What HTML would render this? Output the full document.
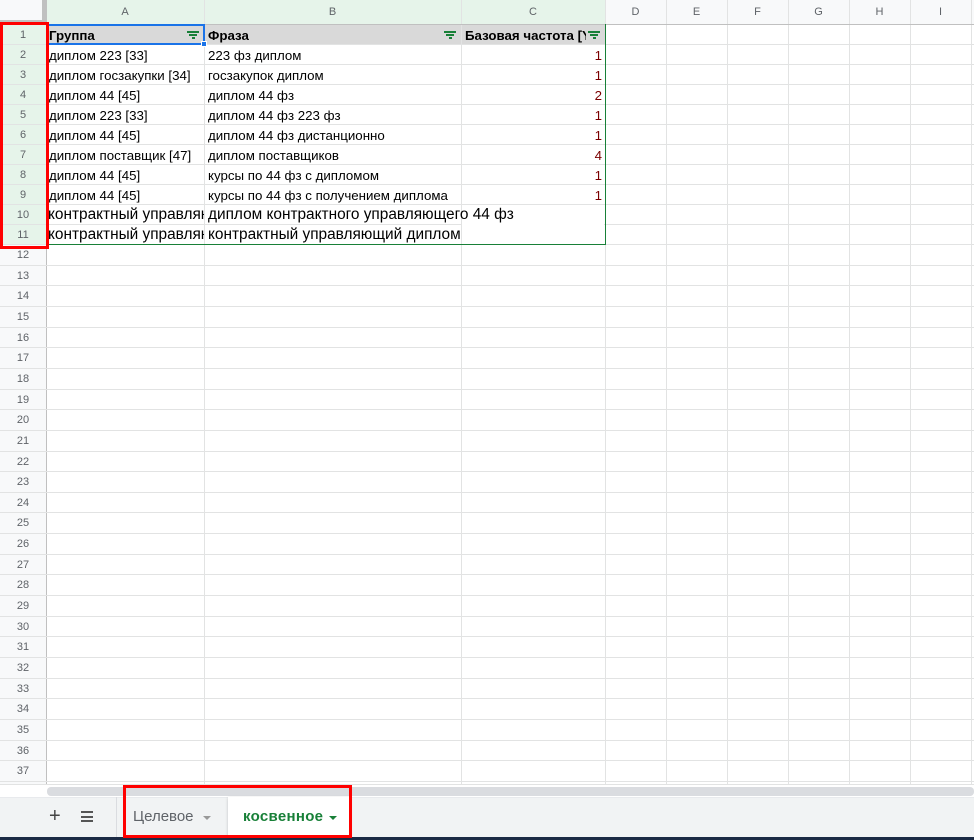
<!DOCTYPE html>
<html><head><meta charset="utf-8"><style>
*{margin:0;padding:0;box-sizing:border-box}
body{width:974px;height:840px;overflow:hidden;background:#fff;font-family:"Liberation Sans",Arial,sans-serif;position:relative}
.v{position:absolute;top:0;width:1px;height:785px;background:#e2e3e3}
.h{position:absolute;left:0;width:974px;height:1px;background:#e2e3e3}
.t{position:absolute;font-size:13.3px;line-height:20px;height:20px;padding-top:2px;white-space:nowrap;overflow:hidden;color:#000}
.n{position:absolute;left:0;width:46px;text-align:center;font-size:11px;color:#5f6368;line-height:20px}
.ch{position:absolute;top:0;height:24px;line-height:24px;text-align:center;font-size:11px;color:#5f6368}
.r{text-align:right;color:#7a0000}
.b{font-size:15.4px;padding-top:0}
.red{position:absolute;border:3px solid #f00}
.fl{position:absolute;width:12px;height:8px}
.fl i{display:block;height:1.5px;background:#188038;margin:0 auto 1.5px}
</style></head><body>
<div style="position:absolute;left:0;top:0;width:974px;height:24px;background:#f8f9fa"></div>
<div style="position:absolute;left:46px;top:0;width:559px;height:24px;background:#e6f4ea"></div>
<div style="position:absolute;left:0;top:24px;width:46px;height:761px;background:#f8f9fa"></div>
<div style="position:absolute;left:0;top:24px;width:46px;height:220px;background:#e6f4ea"></div>
<div style="position:absolute;left:46px;top:24px;width:559px;height:20px;background:#d9d9d9"></div>
<div style="position:absolute;left:0;top:0;width:46px;height:24px;background:#f8f9fa;border-right:4px solid #c0c0c0;border-bottom:4px solid #c0c0c0"></div>
<div class="v" style="left:46px;background:#c0c0c0"></div>
<div class="v" style="left:204px"></div>
<div class="v" style="left:461px"></div>
<div class="v" style="left:605px"></div>
<div class="v" style="left:666px"></div>
<div class="v" style="left:727px"></div>
<div class="v" style="left:788px"></div>
<div class="v" style="left:849px"></div>
<div class="v" style="left:910px"></div>
<div class="v" style="left:971px"></div>
<div class="h" style="top:24px;background:#c0c0c0"></div>
<div class="h" style="top:44px"></div><div class="h" style="top:64px"></div><div class="h" style="top:84px"></div>
<div class="h" style="top:104px"></div><div class="h" style="top:124px"></div><div class="h" style="top:144px"></div>
<div class="h" style="top:164px"></div><div class="h" style="top:184px"></div><div class="h" style="top:204px"></div>
<div class="h" style="top:224px"></div><div class="h" style="top:244px"></div><div class="h" style="top:265px"></div>
<div class="h" style="top:285px"></div><div class="h" style="top:306px"></div><div class="h" style="top:327px"></div>
<div class="h" style="top:347px"></div><div class="h" style="top:368px"></div><div class="h" style="top:389px"></div>
<div class="h" style="top:409px"></div><div class="h" style="top:430px"></div><div class="h" style="top:451px"></div>
<div class="h" style="top:471px"></div><div class="h" style="top:492px"></div><div class="h" style="top:512px"></div>
<div class="h" style="top:533px"></div><div class="h" style="top:554px"></div><div class="h" style="top:574px"></div>
<div class="h" style="top:595px"></div><div class="h" style="top:616px"></div><div class="h" style="top:636px"></div>
<div class="h" style="top:657px"></div><div class="h" style="top:678px"></div><div class="h" style="top:698px"></div>
<div class="h" style="top:719px"></div><div class="h" style="top:740px"></div><div class="h" style="top:760px"></div>
<div class="h" style="top:781px"></div><div class="h" style="top:784px"></div>
<div style="position:absolute;left:605px;top:24px;width:1px;height:220px;background:#188038"></div>
<div style="position:absolute;left:46px;top:244px;width:560px;height:1px;background:#188038"></div>
<div style="position:absolute;left:46px;top:24px;width:159px;height:21px;border:2px solid #1a73e8"></div>
<div style="position:absolute;left:201px;top:41px;width:6px;height:6px;background:#1a73e8;border:1px solid #fff"></div>
<div class="ch" style="left:46px;width:158px">A</div>
<div class="ch" style="left:204px;width:257px">B</div>
<div class="ch" style="left:461px;width:144px">C</div>
<div class="ch" style="left:605px;width:61px">D</div>
<div class="ch" style="left:666px;width:61px">E</div>
<div class="ch" style="left:727px;width:61px">F</div>
<div class="ch" style="left:788px;width:61px">G</div>
<div class="ch" style="left:849px;width:61px">H</div>
<div class="ch" style="left:910px;width:61px">I</div>
<div class="n" style="top:25px">1</div><div class="n" style="top:45px">2</div><div class="n" style="top:65px">3</div>
<div class="n" style="top:85px">4</div><div class="n" style="top:105px">5</div><div class="n" style="top:125px">6</div>
<div class="n" style="top:145px">7</div><div class="n" style="top:165px">8</div><div class="n" style="top:185px">9</div>
<div class="n" style="top:205px">10</div><div class="n" style="top:225px">11</div><div class="n" style="top:245px">12</div>
<div class="n" style="top:266px">13</div><div class="n" style="top:286px">14</div><div class="n" style="top:307px">15</div>
<div class="n" style="top:328px">16</div><div class="n" style="top:348px">17</div><div class="n" style="top:369px">18</div>
<div class="n" style="top:390px">19</div><div class="n" style="top:410px">20</div><div class="n" style="top:431px">21</div>
<div class="n" style="top:452px">22</div><div class="n" style="top:472px">23</div><div class="n" style="top:493px">24</div>
<div class="n" style="top:513px">25</div><div class="n" style="top:534px">26</div><div class="n" style="top:555px">27</div>
<div class="n" style="top:575px">28</div><div class="n" style="top:596px">29</div><div class="n" style="top:617px">30</div>
<div class="n" style="top:637px">31</div><div class="n" style="top:658px">32</div><div class="n" style="top:679px">33</div>
<div class="n" style="top:699px">34</div><div class="n" style="top:720px">35</div><div class="n" style="top:741px">36</div>
<div class="n" style="top:761px">37</div>
<div class="t" style="left:49px;top:24px;width:136px;font-weight:bold">Группа</div>
<div class="fl" style="left:187px;top:31px"><i style="width:12px"></i><i style="width:8px"></i><i style="width:3px"></i></div>
<div class="t" style="left:208px;top:24px;width:230px;font-weight:bold">Фраза</div>
<div class="fl" style="left:444px;top:31px"><i style="width:12px"></i><i style="width:8px"></i><i style="width:3px"></i></div>
<div class="t" style="left:465px;top:24px;width:121px;font-weight:bold">Базовая частота [YW</div>
<div class="fl" style="left:588px;top:31px"><i style="width:12px"></i><i style="width:8px"></i><i style="width:3px"></i></div>
<div class="t" style="left:49px;top:44px;width:154px">диплом 223 [33]</div><div class="t" style="left:208px;top:44px;width:252px">223 фз диплом</div><div class="t r" style="left:462px;top:44px;width:140px">1</div>
<div class="t" style="left:49px;top:64px;width:154px">диплом госзакупки [34]</div><div class="t" style="left:208px;top:64px;width:252px">госзакупок диплом</div><div class="t r" style="left:462px;top:64px;width:140px">1</div>
<div class="t" style="left:49px;top:84px;width:154px">диплом 44 [45]</div><div class="t" style="left:208px;top:84px;width:252px">диплом 44 фз</div><div class="t r" style="left:462px;top:84px;width:140px">2</div>
<div class="t" style="left:49px;top:104px;width:154px">диплом 223 [33]</div><div class="t" style="left:208px;top:104px;width:252px">диплом 44 фз 223 фз</div><div class="t r" style="left:462px;top:104px;width:140px">1</div>
<div class="t" style="left:49px;top:124px;width:154px">диплом 44 [45]</div><div class="t" style="left:208px;top:124px;width:252px">диплом 44 фз дистанционно</div><div class="t r" style="left:462px;top:124px;width:140px">1</div>
<div class="t" style="left:49px;top:144px;width:154px">диплом поставщик [47]</div><div class="t" style="left:208px;top:144px;width:252px">диплом поставщиков</div><div class="t r" style="left:462px;top:144px;width:140px">4</div>
<div class="t" style="left:49px;top:164px;width:154px">диплом 44 [45]</div><div class="t" style="left:208px;top:164px;width:252px">курсы по 44 фз с дипломом</div><div class="t r" style="left:462px;top:164px;width:140px">1</div>
<div class="t" style="left:49px;top:184px;width:154px">диплом 44 [45]</div><div class="t" style="left:208px;top:184px;width:252px">курсы по 44 фз с получением диплома</div><div class="t r" style="left:462px;top:184px;width:140px">1</div>
<div style="position:absolute;left:462px;top:205px;width:142px;height:39px;background:#fff"></div>
<div class="t b" style="left:48px;top:205px;width:156px">контрактный управляющий</div><div class="t b" style="left:208px;top:205px;width:390px">диплом контрактного управляющего 44 фз</div>
<div class="t b" style="left:48px;top:225px;width:156px">контрактный управляющий</div><div class="t b" style="left:208px;top:225px;width:390px">контрактный управляющий диплом</div>
<div style="position:absolute;left:0;top:785px;width:974px;height:12px;background:#fff"></div>
<div style="position:absolute;left:47px;top:787px;width:927px;height:9px;background:#dadce0;border-radius:4px"></div>
<div style="position:absolute;left:0;top:797px;width:974px;height:40px;background:#f1f3f4;border-top:1px solid #e8eaed"></div>
<div style="position:absolute;left:0;top:837px;width:974px;height:3px;background:#1b2a44"></div>
<div style="position:absolute;left:49px;top:805px;font-size:20px;color:#444">+</div>
<div style="position:absolute;left:81px;top:811px;width:12px;height:11px;border-top:2px solid #555;border-bottom:2px solid #555"><div style="margin-top:2.5px;border-top:2px solid #555"></div></div>
<div style="position:absolute;left:116px;top:797px;width:1px;height:40px;background:#dadce0"></div>
<div style="position:absolute;left:133px;top:808px;font-size:15px;color:#5f6368">Целевое</div>
<div style="position:absolute;left:203px;top:816px;border:4px solid transparent;border-top:4px solid #999;border-bottom:0"></div>
<div style="position:absolute;left:228px;top:797px;width:122px;height:40px;background:#fff;box-shadow:0 1px 3px rgba(0,0,0,.2)"></div>
<div style="position:absolute;left:243px;top:808px;font-size:15px;color:#188038;font-weight:bold;letter-spacing:.3px">косвенное</div>
<div style="position:absolute;left:329px;top:816px;border:4px solid transparent;border-top:4px solid #188038;border-bottom:0"></div>
<div class="red" style="left:0;top:22px;width:49px;height:227px"></div>
<div class="red" style="left:123px;top:785px;width:229px;height:53px"></div>
</body></html>
